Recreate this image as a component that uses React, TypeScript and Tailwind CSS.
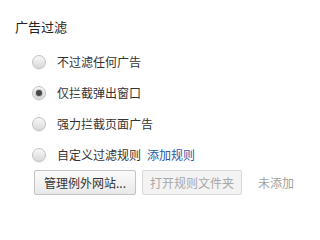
import { useState } from 'react';

const options = ['不过滤任何广告', '仅拦截弹出窗口', '强力拦截页面广告', '自定义过滤规则'];

function Radio({ checked }: { checked: boolean }) {
  return (
    <span className="flex h-[14px] w-[14px] shrink-0 items-center justify-center rounded-full border border-[#c2c2c2] bg-gradient-to-b from-[#f8f8f8] to-[#d9d9d9] shadow-[0_1px_1px_rgba(0,0,0,0.08)]">
      {checked ? <span className="h-[6px] w-[6px] rounded-full bg-[#474747] shadow-[0_0_0_1px_rgba(0,0,0,0.15)]" /> : null}
    </span>
  );
}

export default function App() {
  const [selected, setSelected] = useState(1);

  return (
    <main
      className="h-[203px] w-[294px] overflow-hidden bg-white text-[#333333]"
      style={{ fontFamily: '"Noto Sans CJK SC", "Noto Sans", sans-serif' }}
    >
      <h2 className="ml-[15px] mt-[19px] h-4 text-[13px] font-normal leading-4 text-[#222222]">广告过滤</h2>

      <div className="mt-[11px] flex flex-col">
        {options.map((label, index) => (
          <label
            key={label}
            className="ml-[32px] flex h-[31px] cursor-pointer items-center whitespace-nowrap text-[12px] leading-4"
            onClick={() => setSelected(index)}
          >
            <Radio checked={selected === index} />
            <span className="ml-[11px]">{label}</span>
            {index === 3 ? <a className="ml-[6px] text-[#2b56a6]" href="#">添加规则</a> : null}
          </label>
        ))}
      </div>

      <div className="ml-[34px] flex h-[25px] items-center whitespace-nowrap text-[12px]">
        <button
          type="button"
          className="h-[25px] w-[102px] shrink-0 rounded-[2px] border border-[#c4c4c4] bg-gradient-to-b from-[#fbfbfb] to-[#e9e9e9] text-[#333333]"
        >
          管理例外网站...
        </button>
        <button
          type="button"
          disabled
          className="ml-[6px] h-[25px] w-[100px] shrink-0 rounded-[2px] border border-[#d9d9d9] bg-[#f3f3f3] text-[#a8a8a8]"
        >
          打开规则文件夹
        </button>
        <span className="ml-[16px] shrink-0 text-[#a0a0a0]">未添加规则</span>
      </div>
    </main>
  );
}
